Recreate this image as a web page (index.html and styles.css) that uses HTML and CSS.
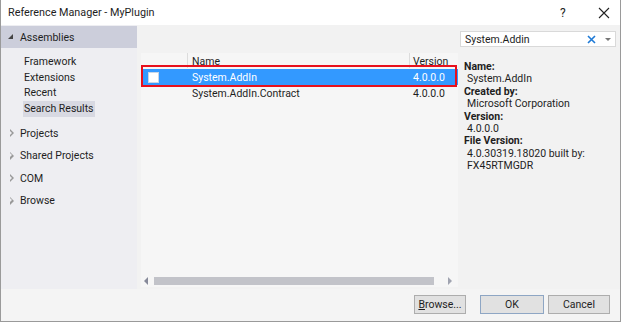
FILE: index.html
```html
<!DOCTYPE html>
<html lang="en">
<head>
  <meta charset="UTF-8" />
  <title>Reference Manager - MyPlugin</title>
  <link rel="stylesheet" href="styles.css">
</head>
<body>
  <div class="window">
    <div class="titlebar">
      <span class="title">Reference Manager - MyPlugin</span>
      <span class="help">?</span>
      <span class="close">
        <svg width="12" height="12" viewBox="0 0 12 12"><path d="M1 1 L11 11 M11 1 L1 11" stroke="#222" stroke-width="1.1" fill="none"/></svg>
      </span>
    </div>
    <div class="main">
      <div class="sidebar">
        <div class="group open selected"><span class="arrow down"></span>Assemblies</div>
        <div class="subitems">
          <div class="sub">Framework</div>
          <div class="sub">Extensions</div>
          <div class="sub">Recent</div>
          <div class="sub active">Search Results</div>
        </div>
        <div class="group"><span class="arrow right"></span>Projects</div>
        <div class="group"><span class="arrow right"></span>Shared Projects</div>
        <div class="group"><span class="arrow right"></span>COM</div>
        <div class="group"><span class="arrow right"></span>Browse</div>
      </div>
      <div class="center">
        <div class="list">
          <div class="list-head">
            <div class="col-check"></div>
            <div class="col-name">Name</div>
            <div class="col-ver">Version</div>
          </div>
          <div class="row selected">
            <div class="col-check"><span class="box"></span></div>
            <div class="col-name">System.AddIn</div>
            <div class="col-ver">4.0.0.0</div>
          </div>
          <div class="row">
            <div class="col-check"></div>
            <div class="col-name">System.AddIn.Contract</div>
            <div class="col-ver">4.0.0.0</div>
          </div>
          <div class="list-fill"></div>
          <div class="hscroll">
            <span class="sarrow left"></span>
            <span class="thumb"></span>
            <span class="sarrow right"></span>
          </div>
          <div class="highlight"></div>
        </div>
      </div>
      <div class="details">
        <div class="search">
          <span class="query">System.Addin</span>
          <span class="clear">
            <svg width="9" height="9" viewBox="0 0 9 9"><path d="M1 1 L8 8 M8 1 L1 8" stroke="#1e7ad6" stroke-width="1.6" fill="none"/></svg>
          </span>
          <span class="drop"></span>
        </div>
        <div class="info">
          <div class="label">Name:</div>
          <div class="value">System.AddIn</div>
          <div class="label">Created by:</div>
          <div class="value">Microsoft Corporation</div>
          <div class="label">Version:</div>
          <div class="value">4.0.0.0</div>
          <div class="label">File Version:</div>
          <div class="value">4.0.30319.18020 built by:</div>
          <div class="value">FX45RTMGDR</div>
        </div>
      </div>
    </div>
    <div class="footer">
      <button class="btn"><u>B</u>rowse...</button>
      <button class="btn default">OK</button>
      <button class="btn">Cancel</button>
    </div>
  </div>
</body>
</html>
```

FILE: styles.css
```css
* { margin: 0; padding: 0; box-sizing: border-box; }
html, body {
  width: 623px; height: 326px; overflow: hidden;
  background: #fff;
  font-family: Roboto, 'Noto Sans', sans-serif;
  font-size: 10.5px;
  color: #1e1e1e;
}
.window {
  width: 621px; height: 322px;
  border: 1px solid #9a9a9a;
  border-top: none;
  display: flex; flex-direction: column;
  background: #f2f2f2;
}
.titlebar {
  height: 25px;
  background: #fff;
  display: flex; align-items: center;
  padding-left: 7px;
  font-size: 10.8px;
}
.title { flex: 1; }
.help { width: 38px; font-size: 12px; }
.close { width: 22px; display: flex; align-items: center; }

.main { flex: 1; display: flex; min-height: 0; }

/* left tree */
.sidebar {
  width: 136px;
  background: #eeeef2;
  padding-bottom: 8px;
}
.group {
  height: 22.6px;
  display: flex; align-items: center;
  padding-left: 6px;
}
.group.selected { background: #cccedb; height: 22px; margin-top: 1px; }
.arrow { width: 13px; display: inline-block; position: relative; height: 8px; }
.arrow.down::before {
  content: ""; position: absolute; left: 1px; top: 1px;
  border-left: 5px solid transparent; border-bottom: 5px solid #444;
}
.arrow.right::before {
  content: ""; position: absolute; left: 3px; top: 0;
  border-top: 4px solid transparent; border-bottom: 4px solid transparent;
  border-left: 4px solid #999;
}
.arrow.right::after {
  content: ""; position: absolute; left: 3px; top: 1.5px;
  border-top: 2.5px solid transparent; border-bottom: 2.5px solid transparent;
  border-left: 2.5px solid #eeeef2;
}
.subitems { padding: 6px 0 5px 22px; }
.sub { height: 15.7px; line-height: 15.7px; padding-left: 1px; }
.sub.active { background: #d8d9e2; display: inline-block; padding: 0 1px; }

/* list */
.center { flex: 1; padding: 28px 0 0 4px; }
.list {
  position: relative;
  height: 234px;
  background: #f6f6f6;
  display: flex; flex-direction: column;
}
.list-head, .row { display: flex; height: 16px; align-items: center; }
.list-head { height: 15px; align-items: flex-end; background: #f6f6f6; }
.list-head > div { height: 15px; line-height: 17px; overflow: hidden; border-right: 1px solid #dcdcdc; }
.col-check { width: 47px; display: flex; align-items: center; padding-left: 7px; }
.col-name { width: 222px; padding-left: 4px; }
.col-ver { flex: 1; padding-left: 3px; }
.list-head .col-ver { border-right: none; }
.row.selected { background: #3399ff; color: #fff; margin-top: 1px; }
.box { width: 11px; height: 11px; background: #fff; border: 1px solid #c8d6e6; }
.list-fill { flex: 1; }
.hscroll {
  height: 12px;
  display: flex; align-items: center;
  padding: 0 6px 0 3px;
}
.thumb { flex: 1; height: 8px; background: #c2c3c9; margin: 0 14px 0 6px; }
.sarrow { width: 0; height: 0; border-top: 4px solid transparent; border-bottom: 4px solid transparent; }
.sarrow.left { border-right: 4px solid #868999; }
.sarrow.right { border-left: 4px solid #a0a3b0; }
.highlight {
  position: absolute; left: 0; top: 12px;
  width: 316px; height: 22px;
  border: 2px solid #e8101c;
}

/* right column */
.details { width: 162px; padding: 6px 4px 0 2px; }
.search {
  height: 16px;
  background: #fff;
  border: 1px solid #d9d9d9;
  display: flex; align-items: center;
  padding-left: 4px;
}
.query { flex: 1; }
.clear { width: 16px; display: flex; align-items: center; }
.drop {
  width: 0; height: 0; margin: 0 4px 0 2px;
  border-left: 3px solid transparent; border-right: 3px solid transparent;
  border-top: 3px solid #777;
}
.info { padding: 14px 0 0 4px; line-height: 12.4px; }
.label { font-weight: bold; }
.value { padding-left: 3px; }

/* bottom bar */
.footer {
  height: 32px;
  background: #f4f4f4;
  display: flex; justify-content: flex-end; align-items: center;
  gap: 4px;
  padding: 0 10px 2px 0;
}
.btn {
  height: 19px;
  background: #e1e1e1;
  border: 1px solid #adadad;
  font-family: inherit; font-size: 10.5px; color: #1e1e1e;
}
.btn:first-child { width: 52px; margin-right: 10px; }
.btn.default { width: 64px; border-color: #8ea6c4; }
.btn:last-child { width: 62px; }
```
